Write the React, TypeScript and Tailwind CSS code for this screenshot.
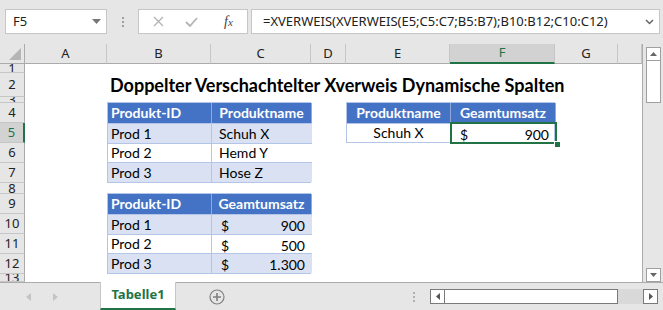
import React from "react";

const CELL_FONT = { fontFamily: "Lato, 'Liberation Sans', sans-serif" };
const UI_FONT = { fontFamily: "'Noto Sans', 'Open Sans', sans-serif" };

// H is only a sliver at the right edge, its letter is out of view
const COLS = ["A", "B", "C", "D", "E", "F", "G", ""];
const ROWS = [1, 2, 3, 4, 5, 6, 7, 8, 9, 10, 11, 12, 13];

const ROW_START: Record<number, string> = {
  1: "row-start-2", 2: "row-start-3", 3: "row-start-4", 4: "row-start-5", 5: "row-start-6",
  6: "row-start-7", 7: "row-start-8", 8: "row-start-9", 9: "row-start-10", 10: "row-start-11",
  11: "row-start-12", 12: "row-start-13", 13: "row-start-14",
};
const COL_START = ["col-start-2", "col-start-3", "col-start-4", "col-start-5", "col-start-6", "col-start-7", "col-start-8", "col-start-9"];

function TopBar() {
  return (
    <div className="h-[44px] bg-[#e6e6e6] flex items-start pt-[9px] pl-[5px]" style={UI_FONT}>
      <div className="w-[102px] h-[25px] bg-white border border-[#c6c6c6] flex items-center justify-between pl-[7px] pr-[5px] text-[13px] text-[#222]">
        <span>F5</span>
        <svg width="9" height="5" viewBox="0 0 9 5"><path d="M0 0h9L4.5 5z" fill="#777" /></svg>
      </div>
      <div className="w-[31px] h-[25px] flex flex-col items-center justify-center gap-[2px]">
        <span className="w-[2px] h-[2px] bg-[#a0a0a0]" />
        <span className="w-[2px] h-[2px] bg-[#a0a0a0]" />
        <span className="w-[2px] h-[2px] bg-[#a0a0a0]" />
      </div>
      <div className="w-[110px] h-[25px] bg-white border border-[#c6c6c6] flex items-center pl-[14px]">
        <svg width="11" height="11" viewBox="0 0 11 11"><path d="M1 1l9 9M10 1L1 10" stroke="#b4b4b4" strokeWidth="1.4" /></svg>
        <svg className="ml-[21px]" width="13" height="10" viewBox="0 0 13 10"><path d="M1 5l4 4 7-8" stroke="#b4b4b4" strokeWidth="1.8" fill="none" /></svg>
        <span className="ml-[26px] text-[14px] italic text-[#444]" style={{ fontFamily: "'Liberation Serif', serif" }}>f<span className="text-[11px]">x</span></span>
      </div>
      <div className="ml-[3px] w-[409px] h-[25px] bg-white border border-[#c6c6c6] flex items-center justify-between pl-[11px] pr-[5px] text-[13px] text-[#222]">
        <span>=XVERWEIS(XVERWEIS(E5;C5:C7;B5:B7);B10:B12;C10:C12)</span>
        <svg width="9" height="6" viewBox="0 0 9 6"><path d="M1 1l3.5 3.5L8 1" stroke="#666" strokeWidth="1.5" fill="none" /></svg>
      </div>
    </div>
  );
}

function Cell({ children, cls = "" }: { children?: React.ReactNode; cls?: string }) {
  return <div className={`flex items-center px-[3px] text-[14px] text-black overflow-hidden whitespace-nowrap ${cls}`}>{children}</div>;
}

function HeadCell({ children, center = false }: { children: React.ReactNode; center?: boolean }) {
  return (
    <div className={`flex items-center px-[3px] bg-[#4472c4] text-white font-bold text-[14px] border-r border-[#8eaadb] last:border-r-0 ${center ? "justify-center" : ""}`}>
      {children}
    </div>
  );
}

function Money({ v }: { v: string }) {
  return (
    <div className="flex items-center justify-between pl-[9px] pr-[7px]">
      <span>$</span>
      <span>{v}</span>
    </div>
  );
}

function Sheet() {
  return (
    <div className="flex h-[238px]">
      <div
        className="w-[642px] grid grid-cols-[25px_82px_104px_100px_35px_104px_105px_63px_1fr] grid-rows-[20px_9px_24px_6px_20px_20px_20px_20px_11px_20px_20px_20px_20px_8px] bg-white"
        style={CELL_FONT}
      >
        {/* corner */}
        <div className="col-start-1 row-start-1 bg-[#e6e6e6] border-r border-b border-[#ababab] flex items-end justify-end p-[3px]">
          <svg width="12" height="12" viewBox="0 0 12 12"><path d="M12 0v12H0z" fill="#b5b5b5" /></svg>
        </div>
        {/* column headers */}
        {COLS.map((c, i) => (
          <div
            key={i}
            className={`${COL_START[i]} row-start-1 flex items-center justify-center text-[13px] border-r border-[#c6c6c6] ${
              c === "F" ? "bg-[#d2d2d2] text-[#217346] border-b-2 border-b-[#217346]" : "bg-[#e6e6e6] text-[#222] border-b border-b-[#ababab]"
            }`}
            style={UI_FONT}
          >
            {c}
          </div>
        ))}
        {/* row headers */}
        {ROWS.map((r) => (
          <div
            key={r}
            className={`col-start-1 ${ROW_START[r]} flex items-center justify-center overflow-hidden text-[13px] leading-none border-b border-[#c6c6c6] ${
              r === 5 ? "bg-[#d2d2d2] text-[#217346] border-r-2 border-r-[#217346]" : "bg-[#e6e6e6] text-[#222] border-r border-r-[#ababab]"
            }`}
            style={UI_FONT}
          >
            {r}
          </div>
        ))}

        {/* title */}
        <div className="col-start-3 row-start-3 flex items-center pl-[3px] whitespace-nowrap text-[18px] font-bold text-black overflow-visible">
          Doppelter Verschachtelter Xverweis Dynamische Spalten
        </div>

        {/* table 1: B4:C7 */}
        <div className="col-start-3 col-span-2 row-start-5 row-span-4 grid grid-cols-[104px_100px] grid-rows-4 border border-[#b4c6e7] text-[14px] -mt-px">
          <HeadCell>Produkt-ID</HeadCell>
          <HeadCell center>Produktname</HeadCell>
          {[
            ["Prod 1", "Schuh X"],
            ["Prod 2", "Hemd Y"],
            ["Prod 3", "Hose Z"],
          ].map(([a, b], i) => (
            <React.Fragment key={i}>
              <Cell cls={`border-t border-r border-[#b4c6e7] ${i !== 1 ? "bg-[#d9e1f2]" : "bg-white"}`}>{a}</Cell>
              <Cell cls={`border-t border-[#b4c6e7] pl-[7px] ${i !== 1 ? "bg-[#d9e1f2]" : "bg-white"}`}>{b}</Cell>
            </React.Fragment>
          ))}
        </div>

        {/* table 2: E4:F5 */}
        <div className="col-start-6 col-span-2 row-start-5 row-span-2 grid grid-cols-[104px_105px] grid-rows-2 border border-[#b4c6e7] -mt-px relative">
          <HeadCell center>Produktname</HeadCell>
          <HeadCell center>Geamtumsatz</HeadCell>
          <Cell cls="border-t border-r border-[#b4c6e7] justify-center">Schuh X</Cell>
          <div className="border-t border-[#b4c6e7] text-[14px]">
            <Money v="900" />
          </div>
          {/* selection */}
          <div className="absolute left-[103px] top-[19px] w-[107px] h-[22px] border-2 border-[#217346] pointer-events-none" />
          <div className="absolute left-[207px] top-[38px] w-[5px] h-[5px] bg-[#217346] border border-white box-content" />
        </div>

        {/* table 3: B9:C12 */}
        <div className="col-start-3 col-span-2 row-start-10 row-span-4 grid grid-cols-[104px_100px] grid-rows-4 border border-[#b4c6e7] -mt-px text-[14px]">
          <HeadCell>Produkt-ID</HeadCell>
          <HeadCell center>Geamtumsatz</HeadCell>
          {[
            ["Prod 1", "900"],
            ["Prod 2", "500"],
            ["Prod 3", "1.300"],
          ].map(([a, b], i) => (
            <React.Fragment key={i}>
              <Cell cls={`border-t border-r border-[#b4c6e7] ${i !== 1 ? "bg-[#d9e1f2]" : "bg-white"}`}>{a}</Cell>
              <div className={`border-t border-[#b4c6e7] ${i !== 1 ? "bg-[#d9e1f2]" : "bg-white"}`}>
                <Money v={b} />
              </div>
            </React.Fragment>
          ))}
        </div>
      </div>

      {/* vertical scrollbar */}
      <div className="w-[21px] bg-[#e6e6e6] border-l border-[#ababab] flex flex-col pl-[3px] pt-[3px]">
        <div className="w-[15px] h-[14px] border border-[#a0a0a0] bg-white flex items-center justify-center">
          <svg width="7" height="4" viewBox="0 0 7 4"><path d="M0 4h7L3.5 0z" fill="#666" /></svg>
        </div>
        <div className="w-[15px] h-[42px] border border-t-0 border-[#a0a0a0] bg-white" />
        <div className="flex-1" />
        <div className="w-[15px] h-[14px] border border-[#a0a0a0] bg-white flex items-center justify-center">
          <svg width="7" height="4" viewBox="0 0 7 4"><path d="M0 0h7L3.5 4z" fill="#666" /></svg>
        </div>
      </div>
    </div>
  );
}

function TabBar() {
  return (
    <div className="h-[28px] bg-[#e6e6e6] border-t border-[#ababab] flex items-stretch" style={UI_FONT}>
      <div className="w-[100px] flex items-center pl-[26px] gap-[22px]">
        <svg width="5" height="8" viewBox="0 0 5 8"><path d="M5 0v8L0 4z" fill="#c4c4c4" /></svg>
        <svg width="5" height="8" viewBox="0 0 5 8"><path d="M0 0v8l5-4z" fill="#c4c4c4" /></svg>
      </div>
      <div className="w-[76px] bg-white border-l border-r border-[#c6c6c6] flex items-center justify-center text-[13px] font-bold text-[#217346] border-b-2 border-b-[#217346] -mt-px">
        Tabelle1
      </div>
      <div className="w-[82px] flex items-center justify-center">
        <svg width="16" height="16" viewBox="0 0 16 16">
          <circle cx="8" cy="8" r="7" stroke="#808080" strokeWidth="1.2" fill="none" />
          <path d="M8 4v8M4 8h8" stroke="#808080" strokeWidth="1.6" />
        </svg>
      </div>
      <div className="w-[157px] flex flex-col items-end justify-center gap-[2px]">
        <span className="w-[2px] h-[2px] bg-[#b0b0b0]" />
        <span className="w-[2px] h-[2px] bg-[#b0b0b0]" />
        <span className="w-[2px] h-[2px] bg-[#b0b0b0]" />
      </div>
      <div className="ml-[15px] flex items-center">
        <div className="w-[15px] h-[15px] border border-[#7a7a7a] bg-white flex items-center justify-center">
          <svg width="4" height="7" viewBox="0 0 4 7"><path d="M4 0v7L0 3.5z" fill="#555" /></svg>
        </div>
        <div className="w-[173px] h-[15px] border border-l-0 border-[#7a7a7a] bg-white" />
        <div className="w-[25px] h-[15px] bg-[#d9d9d9]" />
        <div className="w-[15px] h-[15px] border border-[#7a7a7a] bg-white flex items-center justify-center">
          <svg width="4" height="7" viewBox="0 0 4 7"><path d="M0 0v7l4-3.5z" fill="#555" /></svg>
        </div>
      </div>
    </div>
  );
}

export default function App() {
  return (
    <div className="w-[663px] h-[310px] overflow-hidden bg-[#e6e6e6]">
      <TopBar />
      <Sheet />
      <TabBar />
    </div>
  );
}
